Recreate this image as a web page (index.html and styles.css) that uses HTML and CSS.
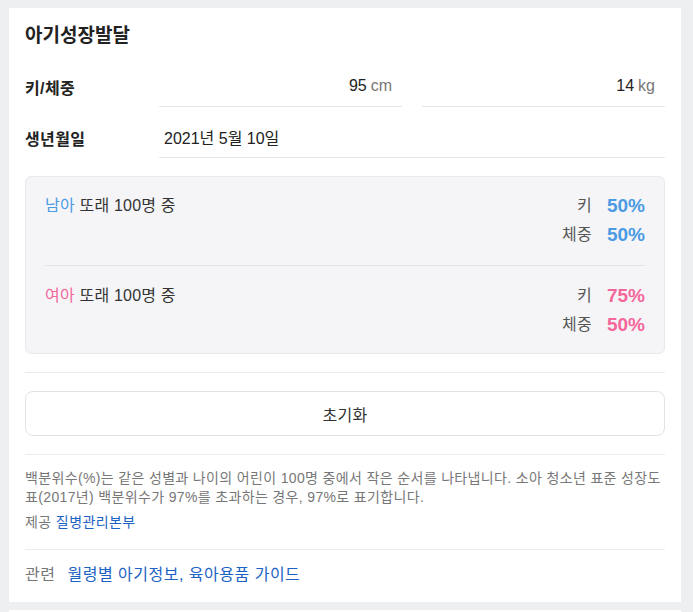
FILE: index.html
```html
<!DOCTYPE html>
<html lang="ko">
<head>
<meta charset="utf-8">
<title>아기성장발달</title>
<link rel="stylesheet" href="styles.css">
</head>
<body>
<section class="card">
  <h2 class="title">아기성장발달</h2>

  <div class="row">
    <div class="label">키/체중</div>
    <div class="fields">
      <div class="field field-right"><span class="num">95</span> <span class="unit">cm</span></div>
      <div class="field field-right"><span class="num">14</span> <span class="unit">kg</span></div>
    </div>
  </div>

  <div class="row row-date">
    <div class="label">생년월일</div>
    <div class="fields">
      <div class="field field-left">2021년 5월 10일</div>
    </div>
  </div>

  <div class="result">
    <div class="group">
      <div class="group-title"><span class="boy">남아</span> 또래 100명 중</div>
      <div class="stats">
        <span class="stat-label">키</span><span class="pct boy">50%</span>
        <span class="stat-label">체중</span><span class="pct boy">50%</span>
      </div>
    </div>
    <div class="group">
      <div class="group-title"><span class="girl">여아</span> 또래 100명 중</div>
      <div class="stats">
        <span class="stat-label">키</span><span class="pct girl">75%</span>
        <span class="stat-label">체중</span><span class="pct girl">50%</span>
      </div>
    </div>
  </div>

  <div class="sep sep-top"></div>
  <button class="reset" type="button">초기화</button>
  <div class="sep sep-btn"></div>

  <p class="note">백분위수(%)는 같은 성별과 나이의 어린이 100명 중에서 작은 순서를 나타냅니다. 소아 청소년 표준 성장도표(2017년) 백분위수가 97%를 초과하는 경우, 97%로 표기합니다.</p>
  <p class="source">제공 <a class="link" href="#">질병관리본부</a></p>

  <div class="sep sep-related"></div>
  <p class="related"><span class="related-label">관련</span><a class="link" href="#">월령별 아기정보</a>, <a class="link" href="#">육아용품 가이드</a></p>
</section>
<div class="next-card"></div>
</body>
</html>
```

FILE: styles.css
```css
html, body {
  margin: 0;
  padding: 0;
}

body {
  background: #eeeff1;
  padding: 8px 0 0 9px;
  font-family: "Liberation Sans", "Noto Sans CJK KR", sans-serif;
  color: #222;
  overflow: hidden;
  height: 612px;
  box-sizing: border-box;
}

.card {
  width: 672px;
  box-sizing: border-box;
  background: #fff;
  padding: 15px 16px 16px;
}

.title {
  margin: 0;
  font-size: 19px;
  line-height: 26px;
  font-weight: bold;
  color: #222;
}

.row {
  display: flex;
  align-items: center;
  margin-top: 17px;
}

.row-date {
  margin-top: 10px;
}

.label {
  width: 134px;
  flex: none;
  font-size: 16px;
  letter-spacing: 0.4px;
  font-weight: bold;
  color: #222;
}

.fields {
  flex: 1;
  display: flex;
  gap: 20px;
}

.field {
  flex: 1;
  height: 40px;
  border-bottom: 1px solid #e6e6e9;
  display: flex;
  align-items: center;
  font-size: 16px;
  color: #222;
}

.field-right {
  justify-content: flex-end;
  padding-right: 10px;
}

.field-left {
  padding-left: 5px;
}

.num {
  color: #222;
}

.unit {
  color: #777;
  margin-left: 4px;
}

.result {
  margin-top: 18px;
  background: #f5f5f8;
  border: 1px solid #e9e9ee;
  border-radius: 6px;
  padding: 0 19px;
}

.group {
  display: flex;
  justify-content: space-between;
  align-items: flex-start;
  padding: 14px 0 16px;
}

.group + .group {
  border-top: 1px solid #e4e4e8;
  padding: 15px 0 14px;
}

.group-title {
  font-size: 16px;
  letter-spacing: 0.2px;
  line-height: 29px;
  color: #333;
}

.boy {
  color: #4a9be3;
}

.girl {
  color: #f4679a;
}

.stats {
  display: grid;
  grid-template-columns: auto auto;
  column-gap: 15px;
  justify-items: end;
  align-items: center;
}

.stat-label {
  font-size: 16px;
  letter-spacing: 0.3px;
  line-height: 29px;
  color: #555;
}

.pct {
  font-size: 19px;
  line-height: 29px;
  font-weight: bold;
}

.sep {
  height: 1px;
  background: #ececee;
}

.sep-top {
  margin-top: 18px;
}

.reset {
  display: block;
  width: 100%;
  height: 45px;
  margin-top: 18px;
  background: #fff;
  border: 1px solid #e3e3e6;
  border-radius: 8px;
  font-family: inherit;
  font-size: 16px;
  letter-spacing: 0.3px;
  color: #333;
  padding: 0;
}

.sep-btn {
  margin-top: 18px;
}

.note {
  margin: 14px 0 0;
  font-size: 14px;
  letter-spacing: 0.35px;
  line-height: 19px;
  color: #777;
}

.source {
  margin: 6px 0 0;
  font-size: 14px;
  letter-spacing: 0.4px;
  line-height: 19px;
  color: #777;
}

.link {
  color: #1a62c4;
  text-decoration: none;
}

.sep-related {
  margin-top: 17px;
}

.related {
  margin: 14px 0 0;
  font-size: 16px;
  letter-spacing: 0.5px;
  line-height: 22px;
  color: #1a62c4;
}

.related-label {
  color: #777;
  margin-right: 12px;
}

.next-card {
  width: 672px;
  height: 20px;
  background: #fff;
  margin-top: 8px;
}
```
